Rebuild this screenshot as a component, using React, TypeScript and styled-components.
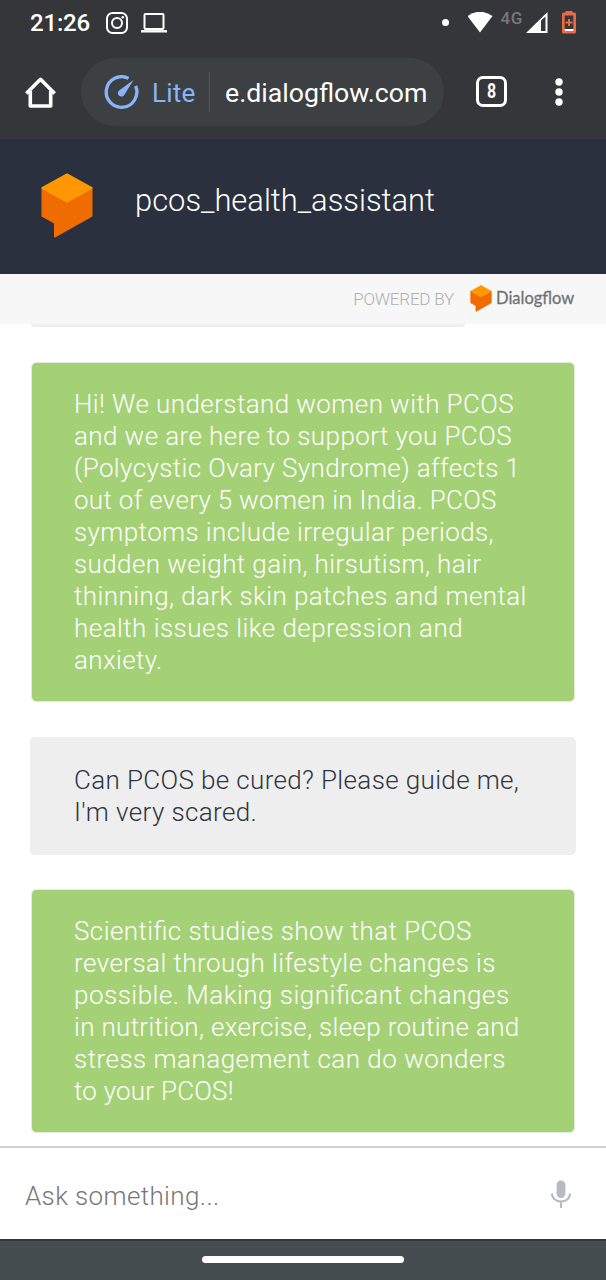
import React from 'react';
import styled, { createGlobalStyle } from 'styled-components';

const GlobalStyle = createGlobalStyle`
  * { box-sizing: border-box; }
  body { margin: 0; background: #fff; font-family: Roboto, "Noto Sans", sans-serif; }
  svg { display: block; flex: none; }
`;

const Screen = styled.main`
  width: 606px;
  height: 1280px;
  display: flex;
  flex-direction: column;
  overflow: hidden;
  background: #fff;
`;

const StatusBar = styled.header`
  height: 46px;
  flex: none;
  display: flex;
  align-items: center;
  background: #35363a;
  color: #fff;
  padding: 0 29px 0 30px;
`;

const Clock = styled.span`
  width: 76px;
  font-size: 24px;
  font-weight: 500;
  line-height: 28px;
  letter-spacing: -0.2px;
`;

const StatusGroup = styled.div<{ $end?: boolean }>`
  display: flex;
  align-items: center;
  gap: 13px;
  margin-left: ${(p) => (p.$end ? 'auto' : '0')};
`;

const Dot = styled.i`
  width: 7px;
  height: 7px;
  border-radius: 50%;
  background: #fff;
  margin: 0 6px 2px 0;
`;

const Network = styled.span`
  font-size: 17px;
  font-weight: 500;
  line-height: 20px;
  color: #77787b;
  letter-spacing: 0.6px;
  margin: 0 -9px 10px -6px;
`;

const SignalIcon = styled.svg`
  margin: 0 1px 0 -1px;
`;

const BrowserBar = styled.nav`
  height: 93px;
  flex: none;
  display: flex;
  align-items: flex-start;
  background: #35363a;
  padding: 12px 39px 0 25px;
  color: #fff;
`;

const BarIcon = styled.span`
  height: 68px;
  display: flex;
  align-items: center;
`;

const AddressPill = styled.div`
  width: 363px;
  height: 68px;
  margin: 0 32px 0 25px;
  border-radius: 34px;
  background: #3c4043;
  display: flex;
  align-items: center;
  padding-left: 23px;
`;

const LiteLabel = styled.span`
  width: 57px;
  margin: 2px 0 0 13px;
  color: #8ab4f8;
  font-size: 26px;
  line-height: 32px;
  letter-spacing: 0.2px;
`;

const PillDivider = styled.i`
  width: 1px;
  height: 40px;
  background: #505357;
`;

const Address = styled.span`
  margin: 2px 0 0 15px;
  font-size: 26.7px;
  line-height: 32px;
  white-space: nowrap;
`;

const TabCount = styled.span`
  width: 31px;
  height: 31px;
  margin: 18px 48px 0 0;
  border: 3px solid #fff;
  border-radius: 7px;
  display: flex;
  justify-content: center;
`;

const TabDigit = styled.b`
  font-size: 19.5px;
  font-weight: 700;
  line-height: 25px;
  transform: scaleX(0.82);
`;

const AgentHeader = styled.header`
  height: 135px;
  flex: none;
  display: flex;
  background: #2b303e;
  padding: 34px 0 0 41px;
`;

const AgentName = styled.h1`
  margin: 10px 0 0 42px;
  color: #fff;
  font-size: 30.9px;
  font-weight: 300;
  line-height: 36px;
`;

const PoweredBar = styled.div`
  height: 50px;
  flex: none;
  display: flex;
  justify-content: flex-end;
  align-items: center;
  background: #f7f7f7;
  padding: 0 33px 1px 0;
`;

const PoweredText = styled.span`
  color: #aeb0b3;
  font-size: 17px;
  font-weight: 300;
  line-height: 20px;
  letter-spacing: -0.2px;
  margin-right: 16px;
`;

const Brand = styled.span`
  width: 77px;
  margin: -2px 0 0 4px;
  color: #717275;
  font-family: Lato, Roboto, sans-serif;
  font-size: 16.5px;
  font-weight: 400;
  line-height: 20px;
  -webkit-text-stroke: 0.3px #717275;
  white-space: nowrap;
`;

const Conversation = styled.section`
  flex: 1;
  min-height: 0;
  overflow: hidden;
  padding: 0 30px;
  display: flex;
  flex-direction: column;
`;

const EarlierBubble = styled.div`
  width: 434px;
  height: 3px;
  flex: none;
  margin: 0 0 35px 1px;
  background: #eee;
  border-radius: 0 0 5px 5px;
`;

const Bubble = styled.div<{ $user?: boolean; $height: number }>`
  height: ${(p) => p.$height}px;
  flex: none;
  margin: 0 ${(p) => (p.$user ? '0 34px' : '1px 35px')};
  padding: ${(p) => (p.$user ? '27px 0 0 44px' : '25px 0 0 42px')};
  border: ${(p) => (p.$user ? 'none' : '1px solid #e2ecd9')};
  border-radius: 5px;
  background: ${(p) => (p.$user ? '#eee' : '#a4d175')};
  background-clip: padding-box;
  color: ${(p) => (p.$user ? '#2f3442' : '#fff')};
`;

const Line = styled.span<{ $spacing: number }>`
  display: block;
  font-size: 26px;
  font-weight: 300;
  line-height: 32px;
  letter-spacing: ${(p) => p.$spacing}px;
  font-feature-settings: "liga" 1;
  white-space: nowrap;
`;

const Composer = styled.footer`
  height: 93px;
  flex: none;
  display: flex;
  justify-content: space-between;
  border-top: 2px solid #d2d2d2;
  padding: 32px 35px 0 25px;
  color: #777;
`;

const NavBar = styled.div`
  height: 41px;
  flex: none;
  display: flex;
  justify-content: center;
  border-top: 2px solid #30383b;
  background: #454d51;
  padding-top: 15px;
`;

const HomeHandle = styled.i`
  width: 202px;
  height: 7px;
  border-radius: 4px;
  background: #fff;
`;

const AgentLogo = ({ width, height }: { width: number; height: number }) => (
  <svg width={width} height={height} viewBox="0 0 52 65" strokeLinejoin="round">
    <path d="M1.5 15 26 28.5 50.5 15V43L14 63.5V50L1.5 43Z" fill="#ef6c00" stroke="#ef6c00" strokeWidth="2" />
    <path d="M26 1.5 50.5 15 26 28.5 1.5 15Z" fill="#ff9800" stroke="#ff9800" strokeWidth="2" />
  </svg>
);

type TextLine = [text: string, spacing: number];

const greeting: TextLine[] = [
  ['Hi! We understand women with PCOS', 0.41],
  ['and we are here to support you PCOS', 0.4],
  ['(Polycystic Ovary Syndrome) affects 1', 0.38],
  ['out of every 5 women in India. PCOS', 0.3],
  ['symptoms include irregular periods,', 0.4],
  ['sudden weight gain, hirsutism, hair', 0.4],
  ['thinning, dark skin patches and mental', 0.42],
  ['health issues like depression and', 0.45],
  ['anxiety.', 0.35],
];
const question: TextLine[] = [
  ['Can PCOS be cured? Please guide me,', 0.36],
  ["I'm very scared.", 0.38],
];
const answer: TextLine[] = [
  ['Scientific studies show that PCOS', 0.41],
  ['reversal through lifestyle changes is', 0.43],
  ['possible. Making significant changes', 0.49],
  ['in nutrition, exercise, sleep routine and', 0.32],
  ['stress management can do wonders', 0.48],
  ['to your PCOS!', 0.22],
];

const Message = ({ lines, user, height }: { lines: TextLine[]; user?: boolean; height: number }) => (
  <Bubble $user={user} $height={height}>
    {lines.map(([text, spacing]) => (
      <Line key={text} $spacing={spacing}>{text}</Line>
    ))}
  </Bubble>
);

export default function App() {
  return (
    <Screen>
      <GlobalStyle />
      <StatusBar>
        <Clock>21:26</Clock>
        <StatusGroup>
          <svg width="22" height="22" viewBox="0 0 22 22" fill="none" stroke="#fff" strokeWidth="2">
            <rect x="1" y="1" width="20" height="20" rx="5.5" />
            <circle cx="11" cy="11" r="5" />
            <circle cx="16.8" cy="5.2" r="1.3" fill="#fff" stroke="none" />
          </svg>
          <svg width="26" height="20" viewBox="0 0 26 20" fill="none" stroke="#fff" strokeWidth="2">
            <rect x="3.5" y="1" width="19" height="15" rx="1" />
            <path d="M0 18.3H26" strokeWidth="2.4" />
          </svg>
        </StatusGroup>
        <StatusGroup $end>
          <Dot />
          <svg width="26" height="22" viewBox="0 0 26 22">
            <path d="M0.5 5Q13-3.5 25.5 5L13 21.5Z" fill="#fff" transform="translate(-1 -1)" />
          </svg>
          <Network>4G</Network>
          <SignalIcon width="22" height="22" viewBox="0 0 22 22">
            <path fillRule="evenodd" d="M0 21 21.5 0V21ZM15 8.5V19H19.5V4.5Z" fill="#fff" />
          </SignalIcon>
          <svg width="15" height="24" viewBox="0 0 15 24">
            <path fillRule="evenodd" d="M3.5 0H10.5V1.5H12.5Q14 1.5 14 3V21Q14 22.5 12.5 22.5H1.5Q0 22.5 0 21V3Q0 1.5 1.5 1.5H3.5ZM2.7 4.5V18H11.3V4.5Z" fill="#ea6a43" />
            <path d="M7 8V15M3.5 11.5H10.5" stroke="#ea6a43" strokeWidth="2" />
            <path d="M2.7 19H11.3" stroke="#fff" strokeWidth="2" />
          </svg>
        </StatusGroup>
      </StatusBar>

      <BrowserBar>
        <BarIcon>
          <svg width="31" height="31" viewBox="0 0 31 31" fill="none" stroke="#fff" strokeWidth="3.6" strokeLinejoin="round">
            <path d="M1.3 16.5 15.5 2.3 29.7 16.5M5.3 14V29H25.7V14" />
          </svg>
        </BarIcon>
        <AddressPill>
          <svg width="35" height="35" viewBox="0 0 35 35" fill="none">
            <path d="M24.5 3.4A15.3 15.3 0 1 0 31.6 11" stroke="#8ab4f8" strokeWidth="3.3" />
            <path d="M29.5 5 20.6 19.4A3.5 3.5 0 1 1 15.4 15.2Z" fill="#8ab4f8" />
          </svg>
          <LiteLabel>Lite</LiteLabel>
          <PillDivider />
          <Address>e.dialogflow.com</Address>
        </AddressPill>
        <TabCount>
          <TabDigit>8</TabDigit>
        </TabCount>
        <BarIcon>
          <svg width="8" height="28" viewBox="0 0 8 28" fill="#fff">
            <circle cx="4" cy="4" r="3.7" />
            <circle cx="4" cy="14" r="3.7" />
            <circle cx="4" cy="24" r="3.7" />
          </svg>
        </BarIcon>
      </BrowserBar>

      <AgentHeader>
        <AgentLogo width={52} height={65} />
        <AgentName>pcos_health_assistant</AgentName>
      </AgentHeader>

      <PoweredBar>
        <PoweredText>POWERED BY</PoweredText>
        <AgentLogo width={22} height={27} />
        <Brand>Dialogflow</Brand>
      </PoweredBar>

      <Conversation>
        <EarlierBubble />
        <Message lines={greeting} height={340} />
        <Message lines={question} height={118} user />
        <Message lines={answer} height={244} />
      </Conversation>

      <Composer>
        <Line $spacing={0.37}>Ask something...</Line>
        <svg width="20" height="28" viewBox="0 0 20 28" fill="none" stroke="#b7bac2" strokeWidth="2">
          <rect x="5.6" y="0.5" width="8.8" height="17.5" rx="4.4" fill="#b7bac2" stroke="none" />
          <path d="M1 13.5C1 24.2 19 24.2 19 13.5M10 21.5V28" />
        </svg>
      </Composer>
      <NavBar>
        <HomeHandle />
      </NavBar>
    </Screen>
  );
}
